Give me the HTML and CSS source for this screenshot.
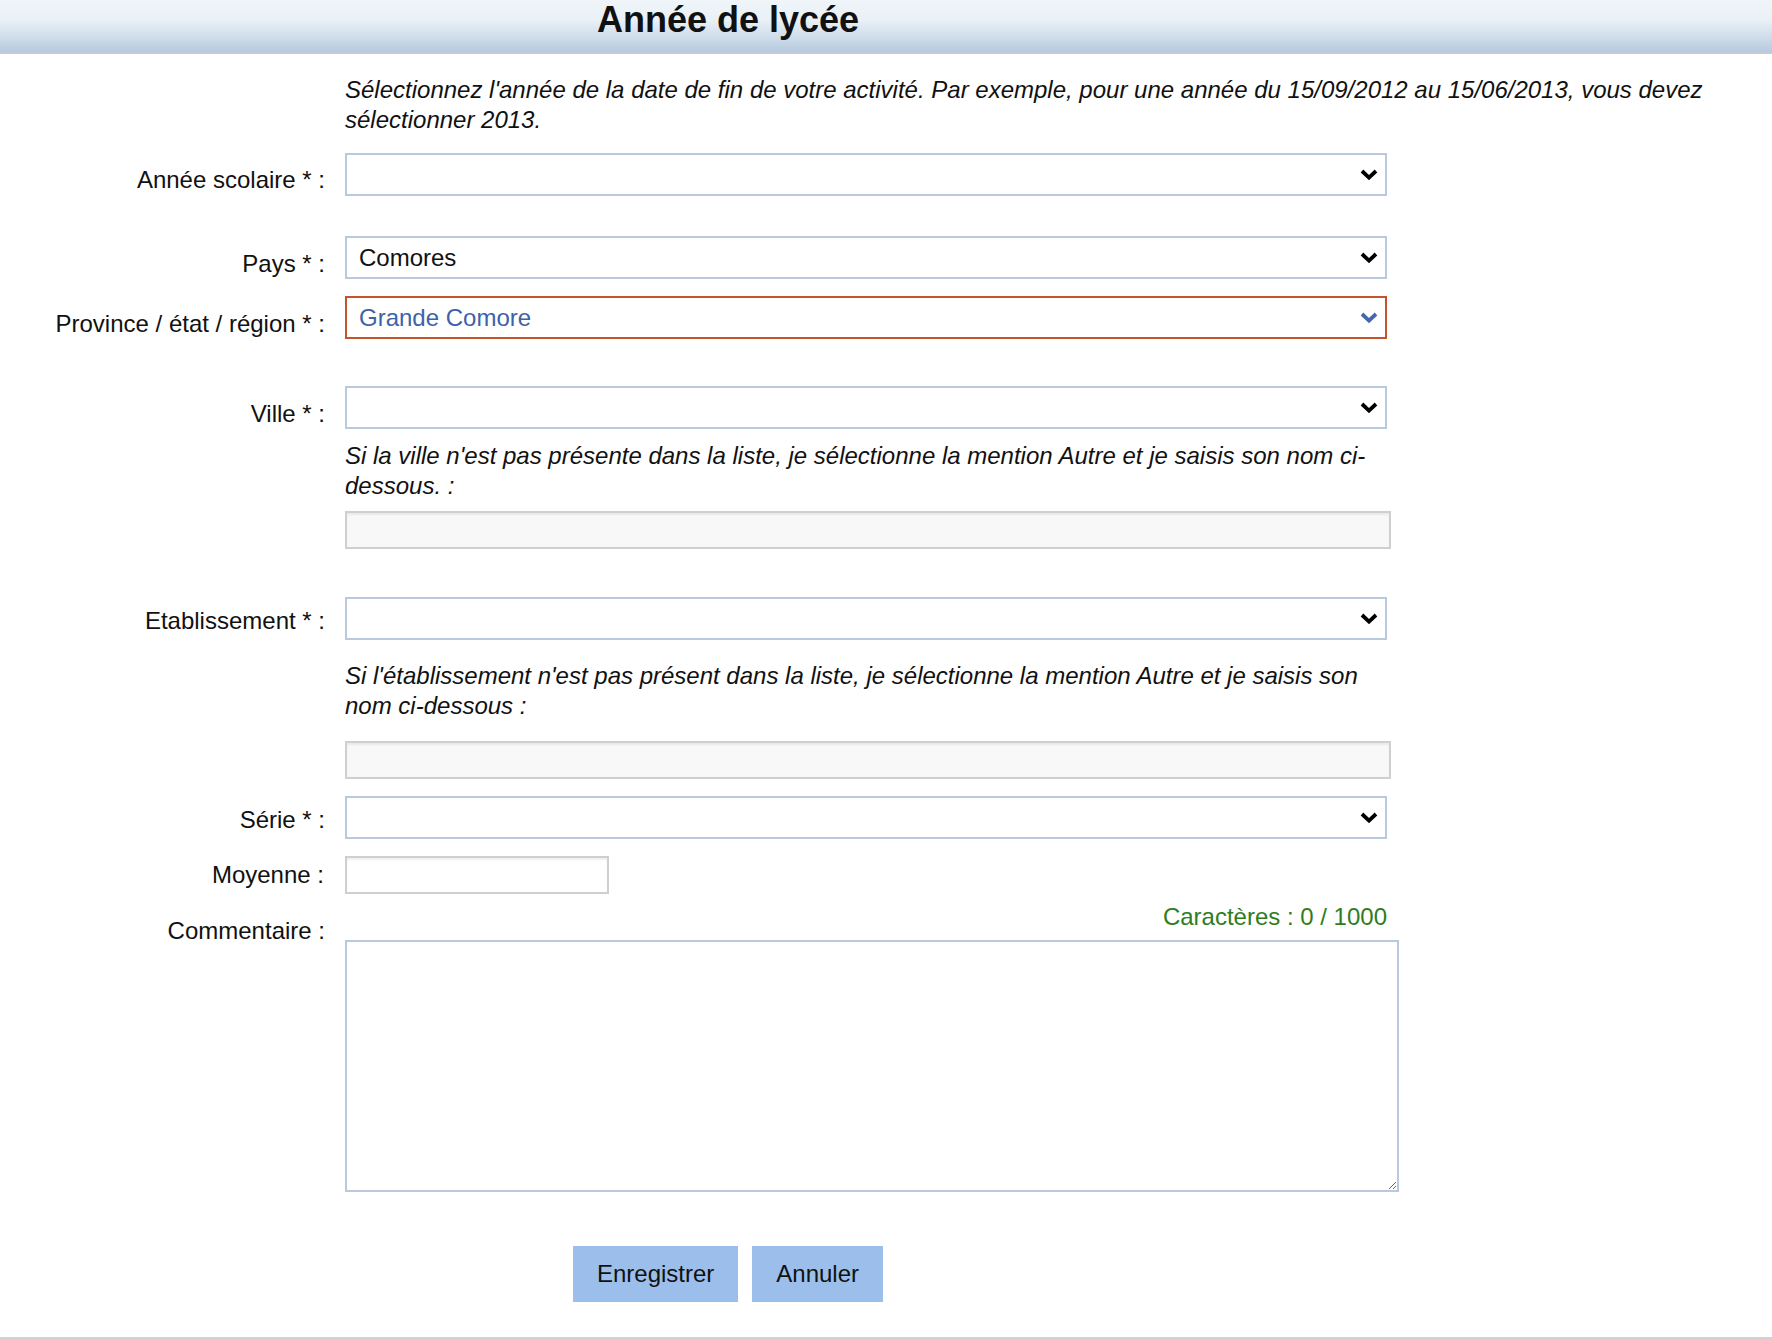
FILE: index.html
```html
<!DOCTYPE html>
<html lang="fr">
<head>
<meta charset="utf-8">
<title>Année de lycée</title>
<link rel="stylesheet" href="styles.css">
</head>
<body>
<header class="topbar">
  <div class="title-wrap"><h1 class="title">Année de lycée</h1></div>
</header>
<main class="form">
  <p class="intro">Sélectionnez l'année de la date de fin de votre activité. Par exemple, pour une année du 15/09/2012 au 15/06/2013, vous devez sélectionner 2013.</p>

  <div class="row mt-19">
    <label class="lbl">Année scolaire * :</label>
    <div class="field"><div class="select"><span class="sel-text"></span><svg class="chev" width="18" height="11" viewBox="0 0 18 11"><polyline points="2,2 9,8.6 16,2" fill="none" stroke="#000" stroke-width="3.8"/></svg></div></div>
  </div>

  <div class="row mt-40">
    <label class="lbl lbl-low">Pays * :</label>
    <div class="field"><div class="select"><span class="sel-text">Comores</span><svg class="chev" width="18" height="11" viewBox="0 0 18 11"><polyline points="2,2 9,8.6 16,2" fill="none" stroke="#000" stroke-width="3.8"/></svg></div></div>
  </div>

  <div class="row mt-17">
    <label class="lbl lbl-low">Province / état / région * :</label>
    <div class="field"><div class="select select-focus"><span class="sel-text sel-blue">Grande Comore</span><svg class="chev" width="18" height="11" viewBox="0 0 18 11"><polyline points="2,2 9,8.6 16,2" fill="none" stroke="#4468ad" stroke-width="3.8"/></svg></div></div>
  </div>

  <div class="row mt-47">
    <label class="lbl lbl-low">Ville * :</label>
    <div class="field"><div class="select"><span class="sel-text"></span><svg class="chev" width="18" height="11" viewBox="0 0 18 11"><polyline points="2,2 9,8.6 16,2" fill="none" stroke="#000" stroke-width="3.8"/></svg></div></div>
  </div>

  <div class="row mt-12">
    <span class="lbl lbl-empty"></span>
    <div class="field"><p class="help">Si la ville n'est pas présente dans la liste, je sélectionne la mention Autre et je saisis son nom ci-dessous. :</p></div>
  </div>

  <div class="row mt-10">
    <span class="lbl lbl-empty"></span>
    <div class="field"><input class="text-input text-wide" type="text"></div>
  </div>

  <div class="row mt-48">
    <label class="lbl lbl-high">Etablissement * :</label>
    <div class="field"><div class="select"><span class="sel-text"></span><svg class="chev" width="18" height="11" viewBox="0 0 18 11"><polyline points="2,2 9,8.6 16,2" fill="none" stroke="#000" stroke-width="3.8"/></svg></div></div>
  </div>

  <div class="row mt-21">
    <span class="lbl lbl-empty"></span>
    <div class="field"><p class="help">Si l'établissement n'est pas présent dans la liste, je sélectionne la mention Autre et je saisis son nom ci-dessous :</p></div>
  </div>

  <div class="row mt-20">
    <span class="lbl lbl-empty"></span>
    <div class="field"><input class="text-input text-wide" type="text"></div>
  </div>

  <div class="row mt-17">
    <label class="lbl lbl-high">Série * :</label>
    <div class="field"><div class="select"><span class="sel-text"></span><svg class="chev" width="18" height="11" viewBox="0 0 18 11"><polyline points="2,2 9,8.6 16,2" fill="none" stroke="#000" stroke-width="3.8"/></svg></div></div>
  </div>

  <div class="row mt-17">
    <label class="lbl lbl-center lbl-short">Moyenne :</label>
    <div class="field"><input class="text-input text-small" type="text"></div>
  </div>

  <div class="row mt-8">
    <label class="lbl lbl-comment">Commentaire :</label>
    <div class="field field-comment">
      <div class="counter">Caractères : 0 / 1000</div>
      <textarea class="comment"></textarea>
    </div>
  </div>
</main>

<div class="actions">
  <button class="btn" type="button">Enregistrer</button>
  <button class="btn" type="button">Annuler</button>
</div>
<footer class="bottom-line"></footer>
</body>
</html>
```

FILE: styles.css
```css
html, body {
  margin: 0;
  padding: 0;
  background: #ffffff;
}

body {
  font-family: "Liberation Sans", Arial, Helvetica, sans-serif;
  font-size: 24px;
  color: #111111;
  width: 1772px;
  height: 1340px;
  overflow: hidden;
}

.topbar {
  height: 52px;
  background: linear-gradient(to bottom, #eff5f9 0%, #eaf1f6 38%, #cfdcea 72%, #b6cadf 100%);
  border-bottom: 2px solid #c3cbd4;
}

.title-wrap {
  width: 1456px;
  text-align: center;
}

.title {
  margin: 0;
  font-size: 36px;
  line-height: 40px;
  font-weight: bold;
  color: #111111;
}

.form {
  display: block;
}

.intro {
  margin: 21px 0 0 345px;
  width: 1410px;
  font-style: italic;
  line-height: 30px;
}

.row {
  display: flex;
  align-items: flex-start;
}

.mt-8 { margin-top: 8px; }
.mt-10 { margin-top: 10px; }
.mt-12 { margin-top: 12px; }
.mt-17 { margin-top: 17px; }
.mt-19 { margin-top: 18px; }
.mt-20 { margin-top: 20px; }
.mt-21 { margin-top: 21px; }
.mt-40 { margin-top: 40px; }
.mt-47 { margin-top: 47px; }
.mt-48 { margin-top: 48px; }

.lbl {
  flex: none;
  width: 325px;
  text-align: right;
  line-height: 30px;
  padding-top: 12px;
  white-space: nowrap;
}

.lbl-low {
  padding-top: 13px;
}

.lbl-high {
  padding-top: 9px;
}

.lbl-empty {
  padding-top: 0;
}

.lbl-center {
  padding-top: 4px;
}

.lbl-short {
  width: 324px;
  margin-right: 1px;
}

.lbl-comment {
  padding-top: 14px;
}

.field {
  margin-left: 20px;
  width: 1042px;
}

.select {
  box-sizing: border-box;
  height: 43px;
  border: 2px solid #b9cadf;
  background: #ffffff;
  display: flex;
  align-items: center;
  justify-content: space-between;
  padding: 0 7px 0 12px;
}

.select-focus {
  border-color: #c2552b;
}

.sel-text {
  color: #111111;
}

.sel-blue {
  color: #3e62a9;
}

.chev {
  display: block;
  flex: none;
}

.help {
  margin: 0;
  font-style: italic;
  line-height: 30px;
}

.text-input {
  display: block;
  box-sizing: border-box;
  height: 38px;
  border: 2px solid #cfcfcf;
  box-shadow: inset 0 2px 2px rgba(0, 0, 0, 0.06);
  font-family: inherit;
  font-size: 24px;
  padding: 0 8px;
  margin: 0;
  outline: none;
}

.text-wide {
  width: 1046px;
  height: 38px;
  background: #f8f8f8;
}

.text-small {
  width: 264px;
  background: #ffffff;
}

.counter {
  text-align: right;
  color: #2e7d1e;
  line-height: 30px;
}

.comment {
  display: block;
  box-sizing: border-box;
  margin: 8px 0 0 0;
  width: 1054px;
  height: 252px;
  border: 2px solid #b9cadf;
  background: #ffffff;
  font-family: inherit;
  font-size: 24px;
  resize: both;
  outline: none;
}

.actions {
  width: 1456px;
  margin-top: 54px;
  display: flex;
  justify-content: center;
  gap: 14px;
}

.btn {
  height: 56px;
  padding: 0 24px;
  border: none;
  background: #9bbfea;
  color: #111111;
  font-family: "Liberation Sans", Arial, Helvetica, sans-serif;
  font-size: 24px;
  margin: 0;
  cursor: pointer;
}

.bottom-line {
  margin-top: 35px;
  height: 4px;
  background: #d2d2d2;
}
```
